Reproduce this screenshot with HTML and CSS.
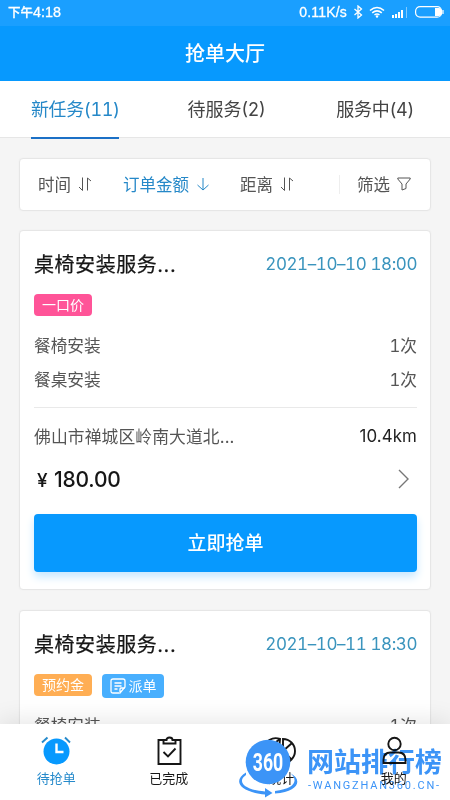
FILE: index.html
```html
<!DOCTYPE html>
<html lang="zh-CN">
<head>
<meta charset="utf-8">
<title>抢单大厅</title>
<link rel="stylesheet" href="styles.css">
</head>
<body>
<div class="app">
  <header class="top">
    <div class="status">
      <span class="clock">下午<span class="digits">4:18</span></span>
      <span class="speed">0.11K/s</span>
      <svg class="bt" width="10" height="14" viewBox="0 0 10 14"><path d="M1.500 4l7 6L5 13V1l3.500 3-7 6"/></svg>
      <svg class="wifi" width="16" height="12" viewBox="0 0 16 12"><path d="M1 4.500Q8-1.500 15 4.500M3.200 6.800Q8 2.800 12.800 6.800M5.500 9Q8 7 10.500 9"/><circle cx="8" cy="10.500" r="1.200"/></svg>
      <svg class="signal" width="16" height="11" viewBox="0 0 16 11"><path d="M1 8v3M4 7v4M7 5v6M10 3v8"/><path class="dim" d="M14.500 0v11"/></svg>
      <svg class="battery" width="29" height="12" viewBox="0 0 29 12"><rect x=".6" y=".6" width="26" height="10.600" rx="4.500"/><path class="fill" d="M20 2h4q2.500 0 2.500 4T24 10h-4z"/><path d="M28 4v4"/></svg>
    </div>
    <h1 class="title">抢单大厅</h1>
  </header>
  <nav class="tabs">
    <span class="tab active">新任务(11)</span>
    <span class="tab second">待服务(2)</span>
    <span class="tab third">服务中(4)</span>
  </nav>
  <main class="content">
    <section class="filters">
      <span class="filter time">时间<svg width="14" height="14" viewBox="0 0 14 14"><path d="M4.500 .5v13L1 10M9.500 13.500V1L13 4"/></svg></span>
      <span class="filter amount">订单金额<svg width="14" height="14" viewBox="0 0 14 14"><path d="M7 1v12M1.500 8L7 13l5.500-5"/></svg></span>
      <span class="filter distance">距离<svg width="14" height="14" viewBox="0 0 14 14"><path d="M4.500 .5v13L1 10M9.500 13.500V1L13 4"/></svg></span>
      <span class="filter choose">筛选<svg width="14" height="14" viewBox="0 0 14 14"><path d="M.8 1h12.400v1L9 7v4.500L5 13V7L.8 2z"/></svg></span>
    </section>
    <article class="card">
      <div class="row head"><h2>桌椅安装服务...</h2><time>2021–10–10 18:00</time></div>
      <div class="tags"><span class="tag pink">一口价</span></div>
      <div class="row item"><span>餐椅安装</span><span class="count">1次</span></div>
      <div class="row item"><span>餐桌安装</span><span class="count">1次</span></div>
      <div class="row place"><span>佛山市禅城区岭南大道北...</span><span class="km">10.4km</span></div>
      <div class="row price"><span><span class="yen">¥</span>180.00</span><svg width="12" height="20" viewBox="0 0 12 20"><path d="M1 1l9 9-9 9"/></svg></div>
      <button class="grab">立即抢单</button>
    </article>
    <article class="card">
      <div class="row head"><h2>桌椅安装服务...</h2><time>2021–10–11 18:30</time></div>
      <div class="tags"><span class="tag orange">预约金</span><span class="tag blue"><svg width="16" height="16" viewBox="0 0 16 16"><path d="M9 15H3q-2 0-2-2V3q0-2 2-2h10q2 0 2 2v6l-5 6V11q0-1 1-1h4M4.500 5h7M4.500 8h7M4.500 11h3"/></svg>派单</span></div>
      <div class="row item"><span>餐椅安装</span><span class="count">1次</span></div>
    </article>
  </main>
  <nav class="bottom">
    <div class="nav on">
      <svg width="30" height="30" viewBox="0 0 30 30"><circle class="disc" cx="15.500" cy="15.500" r="13"/><path class="bell" d="M1 6.500l5.500-5M24 1.500l5 5"/><path class="hands" d="M15.500 7.500V16h7"/></svg><span>待抢单</span>
    </div>
    <div class="nav">
      <svg width="30" height="30" viewBox="0 0 30 30"><path d="M9.500 4H4.500v24h22V4h-5M9.500 7.500V4h3q0-2.500 3-2.500t3 2.500h3v3.500zM9.500 16l4.500 4.500 7.500-8"/></svg><span>已完成</span>
    </div>
    <div class="nav">
      <svg width="30" height="30" viewBox="0 0 30 30"><path d="M17 3a12 12 0 0 1 0 24zM17 15l9-8M17 15l8 8M14 3A12 12 0 1 0 12 26zM10 6l4-3"/></svg><span>统计</span>
    </div>
    <div class="nav">
      <svg width="30" height="30" viewBox="0 0 30 30"><circle cx="15.500" cy="8" r="6.200"/><path d="M4.500 27v-3q0-7.500 7-7.500h8q7 0 7 7.500v3z"/></svg><span>我的</span>
    </div>
  </nav>
  <div class="mark">
    <svg width="70" height="62" viewBox="0 0 70 62"><circle cx="31" cy="24" r="22.300"/><path d="M9 34.500C-4 42 1 54 28 56.500v3l7.500-4.500-7.500-5v3.500C6 52 0 43 9 37zM53 35c9 7 5 16-15 18v2.500c24-2 28-14 15-20.500z"/></svg>
    <b class="num">360</b>
    <div class="words"><div class="name">网站排行榜</div><div class="site">-WANGZHAN360.CN-</div></div>
  </div>
</div>
</body>
</html>
```
FILE: styles.css
```css
* { box-sizing: border-box; }
body { margin: 0; font-family: Inter, "Noto Sans CJK SC", sans-serif; color: #444; }
svg { display: block; flex: none; fill: none; stroke: currentColor; }
h1, h2 { margin: 0; font-weight: 500; }
.app { position: relative; width: 450px; height: 800px; overflow: hidden; background: #f5f5f5; display: flex; flex-direction: column; }
.top { flex: none; height: 81px; background: #0799fe; color: #fff; }
.status { height: 26px; background: #1a9fff; display: flex; align-items: center; padding: 0 6px 2px 8px; font: 500 12.500px "Liberation Sans", "Noto Sans CJK SC", sans-serif; }
.clock { -webkit-text-stroke: .3px #fff; margin-top: -2px; }
.digits { font-size: 14.300px; }
.speed { margin-left: auto; font-size: 14px; letter-spacing: .2px; margin-right: 6px; -webkit-text-stroke: .3px #fff; }
.bt { stroke-width: 1.3; margin-right: 6px; }
.wifi { stroke-width: 1.6; margin-right: 7px; }
.wifi circle { fill: #fff; stroke: none; }
.signal { stroke-width: 2; margin-right: 7px; }
.dim { opacity: .45; stroke-width: 1; }
.battery { stroke-width: 1.2; }
.fill { fill: #fff; stroke: none; }
.title { height: 55px; line-height: 56px; text-align: center; font-size: 20px; }
.tabs { flex: none; height: 57px; background: #fff; border-bottom: 1px solid #e6e6e6; display: flex; justify-content: space-between; padding: 0 36px 0 31px; font-size: 18px; line-height: 58px; white-space: nowrap; }
.tab { height: 58px; }
.active { color: #2588c8; border-bottom: 2px solid #1b70c6; width: 88px; letter-spacing: -.4px; font-variant-numeric: tabular-nums; }
.second { margin-left: -2px; }
.third { letter-spacing: -.15px; }
.content { padding: 20px 19px 0; flex: 1; min-height: 0; }
.filters, .card { background: #fff; border: 1px solid #e6e6e6; border-radius: 4px; box-shadow: 0 0 2px #eee; }
.filters { height: 53px; display: flex; align-items: center; font-size: 16.500px; color: #555; padding: 0 19px 1px 18px; }
.filter { display: flex; align-items: center; gap: 7px; white-space: nowrap; }
.amount { color: #2588c8; margin-left: 31px; }
.distance { margin-left: 30px; }
.choose { margin-left: auto; border-left: 1px solid #eee; height: 19px; padding-left: 17px; }
.card { height: 360px; margin-top: 19px; padding: 15px 13px 0 14px; }
.card + .card { margin-top: 20px; }
.row { display: flex; justify-content: space-between; align-items: center; white-space: nowrap; }
.head { height: 34px; }
.head h2 { font-size: 20px; font-weight: 400; color: #161616; letter-spacing: .55px; -webkit-text-stroke: .25px; }
time { color: #3a94bd; font-size: 17px; letter-spacing: -.42px; font-variant-numeric: tabular-nums; padding-top: 1px; }
.tags { display: flex; align-items: flex-start; gap: 10px; padding-top: 14px; height: 48px; }
.tag { display: flex; align-items: center; justify-content: center; width: 58px; height: 22px; padding-bottom: 1px; border-radius: 4px; color: #fff; font-size: 14px; line-height: 20px; }
.pink { background: #ff5498; }
.orange { background: #ffae54; }
.blue { background: #48affe; width: 62px; height: 24px; gap: 3px; }
.blue svg { stroke-width: 1.300; }
.item { height: 34px; font-size: 16.700px; color: #555; }
.count { font-variant-numeric: tabular-nums; }
.place { height: 58px; margin-top: 11px; border-top: 1px solid #e9e9e9; font-size: 16.800px; letter-spacing: .1px; color: #555; padding-bottom: 2px; }
.km { color: #222; font-size: 16.900px; }
.price { height: 28px; color: #161616; font-size: 21px; font-weight: 500; padding: 0 7px 0 3px; letter-spacing: -.2px; }
.yen { display: inline-block; width: 17px; font-size: 19px; }
.price svg { color: #777; stroke-width: 1.400; }
.grab { display: block; width: 100%; height: 58px; margin-top: 21px; padding-bottom: 4px; border: 0; border-radius: 4px; background: #0799fe; color: #fff; font: 500 19px "Noto Sans CJK SC", sans-serif; box-shadow: 0 5px 9px #c7e8ff; }
.bottom { position: absolute; left: 0; bottom: 0; width: 450px; height: 76px; background: #fff; display: flex; box-shadow: 0 -2px 24px #0000001c; }
.nav { width: 112.500px; display: flex; flex-direction: column; align-items: center; padding-top: 12px; font-size: 13px; line-height: 22px; color: #161616; }
.nav span { margin-top: 1px; }
.nav svg { stroke-width: 1.900; }
.nav.on { color: #268acb; }
.disc { fill: #0799fe; stroke: none; }
.hands { stroke: #fff; stroke-width: 2.400; }
.mark { position: absolute; left: 237px; top: 738px; width: 213px; height: 62px; color: #3c94f7; display: flex; }
.mark svg { fill: currentColor; stroke: none; }
.num { position: absolute; left: 10px; top: 11px; width: 42px; text-align: center; color: #fff; font: 700 23px/27px Roboto, sans-serif; transform: scale(.77, 1.16); }
.words { width: 142px; white-space: nowrap; mix-blend-mode: multiply; }
.name { font: 700 27px/34px "Noto Sans CJK SC", sans-serif; margin-top: 6px; }
.site { font: 400 11px/14px Roboto, sans-serif; letter-spacing: 1.800px; margin: 1px 0 0 1px; }
```
